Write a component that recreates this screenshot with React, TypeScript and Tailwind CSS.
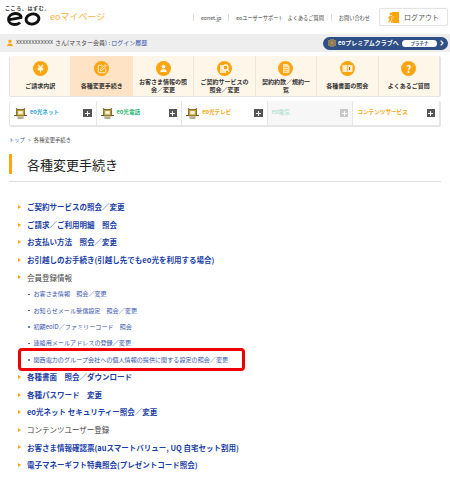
import { ChevronRight, JapaneseYen, Plus, SquarePen, User } from "lucide-react";
import type { ReactNode } from "react";

const jp = "[font-family:'Noto_Sans_CJK_JP','Noto_Sans',sans-serif]";

function EoLogo() {
  return (
    <svg width="34" height="14" viewBox="0 0 34 14" className="mt-[1px] ml-[2px]">
      <path
        d="M2.8 7.6 14 5.6C14.5 2.8 11 1.4 8 1.5 4 1.8 1.5 4.5 1.5 7.5c0 3.3 3 5 6 5 2.5 0 4.500-.7 5.500-2"
        fill="none"
        stroke="#111"
        strokeWidth="2.8"
      />
      <ellipse cx="25.500" cy="7" rx="6.500" ry="5" transform="rotate(-12 25.500 7)" fill="none" stroke="#111" strokeWidth="2.9" />
    </svg>
  );
}

function MenuTile({ icon, label, active }: { icon: ReactNode; label: string; active?: boolean }) {
  return (
    <div
      className={`flex h-[40px] flex-1 flex-col items-center border-r border-[#f0e6d8] last:border-r-0 ${
        active ? "bg-[#ffe3c4]" : "bg-[#fff6ea]"
      }`}
    >
      <div className="mt-[5px] flex h-[15px] w-[15px] shrink-0 items-center justify-center rounded-full bg-[#fda50f] text-white">
        {icon}
      </div>
      <div className="mt-[1px] flex h-[18px] items-center px-[5px] text-center text-[6px] leading-[8px] font-bold text-[#333]">
        {label}
      </div>
    </div>
  );
}

function SearchDocIcon() {
  return (
    <svg width="11" height="11" viewBox="0 0 11 11">
      <rect x="1" y="2" width="6" height="8" fill="#ffe3b8" />
      <circle cx="6.5" cy="4.5" r="2.6" fill="#fda50f" stroke="#fff" strokeWidth="1.2" />
      <path d="M8.3 6.4 10.2 8.6" stroke="#fff" strokeWidth="1.3" />
    </svg>
  );
}

function DocIcon() {
  return (
    <svg width="10" height="11" viewBox="0 0 10 11">
      <path d="M2 1h4.5L8.500 3v7H2z" fill="#ffe3b8" />
      <path d="M3.5 4.5h3.500M3.5 6.5h3.500M3.5 8.5h2.500" stroke="#fda50f" strokeWidth=".7" />
    </svg>
  );
}

function BookIcon() {
  return (
    <svg width="11" height="9" viewBox="0 0 11 9">
      <rect x=".5" y="1" width="10" height="7" fill="#ffe9c8" />
      <path d="M5.500 1v7" stroke="#fda50f" strokeWidth=".6" />
      <path d="M7.500 3v3" stroke="#b06a00" strokeWidth="1" />
    </svg>
  );
}

function Mascot({ body, line }: { body: string; line: string }) {
  return (
    <svg width="13" height="12" viewBox="0 0 13 12" className="shrink-0">
      <path d="M2 1.500 4 3M11 1.500 9 3" stroke={line} strokeWidth="1.1" />
      <rect x="2.5" y="2.5" width="8" height="6.5" rx=".8" fill={body} stroke={line} strokeWidth=".8" />
      <rect x="4.2" y="4" width="4.6" height="3.4" fill="#f4f1de" />
      <path d="M0 8.500h3M10 8.500h3M3.500 11h6" stroke={line} strokeWidth="1.2" />
    </svg>
  );
}

function ServiceTab({
  label,
  color,
  width,
  mascot,
  disabled,
}: {
  label: string;
  color: string;
  width: string;
  mascot?: ReactNode;
  disabled?: boolean;
}) {
  return (
    <div
      className={`flex h-full items-center border-r border-[#e6e6e6] pr-[4px] pl-[4px] last:border-r-0 ${width} ${
        disabled ? "bg-[#f7f7f7]" : ""
      }`}
    >
      {mascot}
      <span className={`flex-1 text-[5.6px] leading-none font-bold whitespace-nowrap ${mascot ? "ml-[3px]" : ""} ${color}`}>{label}</span>
      <span className={`flex h-[8.5px] w-[8.5px] items-center justify-center text-white ${disabled ? "bg-[#c8c8c8]" : "bg-[#555]"}`}>
        <Plus className="h-[7px] w-[7px]" strokeWidth={3.5} />
      </span>
    </div>
  );
}

function MainRow({ label, plain }: { label: string; plain?: boolean }) {
  return (
    <li className="flex h-[17.6px] items-center">
      <span className="mr-[6px] h-0 w-0 border-y-[2.5px] border-l-[3px] border-y-transparent border-l-[#fda50f]" />
      <span className={`text-[7.5px] leading-none whitespace-nowrap ${plain ? "text-[#444]" : "font-bold text-[#1c3fa8]"}`}>{label}</span>
    </li>
  );
}

function SubRow({ label }: { label: string }) {
  return (
    <li className="flex h-[16.4px] items-center pl-[10px] text-[6.1px] leading-none whitespace-nowrap text-[#3554ad]">
      <span className="mr-[4px] h-[1.5px] w-[1.5px] rounded-full bg-[#3554ad]" />
      {label}
    </li>
  );
}

export default function App() {
  return (
    <div className={`relative h-[486px] w-[450px] overflow-hidden bg-white ${jp}`}>
      {/* header */}
      <header className="flex h-[34px] items-start">
        <div className="ml-[5px] flex w-[41px] shrink-0 flex-col pt-[5px]">
          <span className="text-[5px] leading-[6px] font-bold tracking-[0.6px] whitespace-nowrap text-[#333]">こころ、はずむ。</span>
          <EoLogo />
        </div>
        <span className="mt-[10px] ml-[4px] text-[9px] leading-[14px] text-[#fdb13f]">eoマイページ</span>
        <nav className="mt-[14px] ml-auto flex items-center text-[5.2px] leading-[7px] text-[#444]">
          <span className="border-l border-[#ddd] pl-[7px]">eonet.jp</span>
          <span className="ml-[7px] border-l border-[#ddd] pl-[7px]">eoユーザーサポート</span>
          <span className="ml-[4px]">よくあるご質問</span>
          <span className="ml-[7px] border-l border-[#ddd] pl-[7px]">お問い合わせ</span>
        </nav>
        <div className="mt-[8px] mr-[2px] ml-[9px] flex h-[18px] w-[69px] items-center justify-center rounded-[2px] border border-[#e4e4e4] text-[7px] text-[#555] shadow-[0_0_1px_#ddd]">
          <svg width="11" height="11" viewBox="0 0 11 11" className="mr-[5px]">
            <rect x="4" y="0" width="7" height="11" fill="#fda50f" />
            <circle cx="3" cy="2" r="1.5" fill="#fda50f" />
            <path d="M0 5 3 3.500 5.500 5v1L3.600 5.500V8l1 3H3L2.300 8.600 1.200 11H0l1-3V6L0 6.500z" fill="#fda50f" stroke="#fff" strokeWidth=".3" />
          </svg>
          ログアウト
        </div>
      </header>

      {/* member bar */}
      <div className="flex h-[18px] items-center bg-[#eeeeee] pl-[6px] text-[6px] leading-none text-[#444]">
        <User className="mr-[2px] h-[8px] w-[8px] fill-[#fda50f] text-[#fda50f]" />
        <span className="mr-[2px] text-[5.4px]">XXXXXXXXXXXX</span>
        さん(マスター会員) : <span className="ml-[1px] text-[#3554ad]">ログイン履歴</span>
        <div className="mr-[2px] ml-auto flex h-[13px] w-[125px] items-center rounded-full bg-[#2f5086] pr-[2px] pl-[5px] text-[6px] font-bold text-white">
          <svg width="8" height="8" viewBox="0 0 8 8" className="mr-[2px]">
            <path d="M1 1v6M3 0v8M5 0v8M7 1v6M3 4h2" stroke="#e0a040" strokeWidth="1.1" />
          </svg>
          eoプレミアムクラブへ
          <span className="ml-auto flex h-[7px] w-[35px] items-center justify-center rounded-full bg-white text-[4.5px] text-[#2f5086]">プラチナ</span>
          <ChevronRight className="ml-[1px] h-[8px] w-[8px]" strokeWidth={3.5} />
        </div>
      </div>

      {/* service menu */}
      <div className="mx-[9px] mt-[4px] flex overflow-hidden rounded-[2px] border-r-2 border-b border-l border-[#e4e4e4]">
        <MenuTile icon={<JapaneseYen className="h-[9px] w-[9px]" strokeWidth={3} />} label="ご請求内訳" />
        <MenuTile active icon={<SquarePen className="h-[10px] w-[10px]" strokeWidth={2} />} label="各種変更手続き" />
        <MenuTile icon={<User className="h-[9px] w-[9px] fill-white" />} label="お客さま情報の照会／変更" />
        <MenuTile icon={<SearchDocIcon />} label="ご契約サービスの照会／変更" />
        <MenuTile icon={<DocIcon />} label="契約約款／規約一覧" />
        <MenuTile icon={<BookIcon />} label="各種書面の照会" />
        <MenuTile icon={<span className="text-[10px] leading-none font-bold">?</span>} label="よくあるご質問" />
      </div>

      <div className="mx-[9px] mt-[4px] flex h-[26px] rounded-[2px] border-r-2 border-b-2 border-l border-[#e6e6e6]">
        <ServiceTab width="w-[87px]" label="eo光ネット" color="text-[#29a6e0]" mascot={<Mascot body="#c49a2a" line="#6b5a20" />} />
        <ServiceTab width="w-[86px]" label="eo光電話" color="text-[#2bb673]" mascot={<Mascot body="#b59a30" line="#6b5a20" />} />
        <ServiceTab width="w-[86px]" label="eo光テレビ" color="text-[#fda50f]" mascot={<Mascot body="#c49a2a" line="#6b5a20" />} />
        <ServiceTab width="w-[86px]" label="eo電気" color="text-[#b5e3d3]" disabled />
        <ServiceTab width="w-[86px]" label="コンテンツサービス" color="text-[#fda50f]" />
      </div>

      {/* breadcrumb + title */}
      <div className="mt-[9.5px] ml-[9px] flex h-[8px] items-center text-[5.3px] leading-none text-[#444]">
        <span className="text-[#3554ad]">トップ</span>
        <span className="mx-[3px] text-[#888]">&gt;</span>
        各種変更手続き
      </div>
      <div className="mx-[9px] mt-[9.5px] border-b border-[#dddddd] pb-[7px]">
        <h1 className="flex h-[20px] items-center border-l-[3px] border-[#fda50f] pl-[15px] text-[13px] leading-none text-[#222]">各種変更手続き</h1>
      </div>

      {/* link list */}
      <ul className="mt-[16.2px] ml-[18px]">
        <MainRow label="ご契約サービスの照会／変更" />
        <MainRow label="ご請求／ご利用明細　照会" />
        <MainRow label="お支払い方法　照会／変更" />
        <MainRow label="お引越しのお手続き(引越し先でもeo光を利用する場合)" />
        <MainRow plain label="会員登録情報" />
        <SubRow label="お客さま情報　照会／変更" />
        <SubRow label="お知らせメール受信設定　照会／変更" />
        <SubRow label="初期eoID／ファミリーコード　照会" />
        <SubRow label="連絡用メールアドレスの登録／変更" />
        <SubRow label="関西電力のグループ会社への個人情報の提供に関する設定の照会／変更" />
        <MainRow label="各種書面　照会／ダウンロード" />
        <MainRow label="各種パスワード　変更" />
        <MainRow label="eo光ネット セキュリティー照会／変更" />
        <MainRow plain label="コンテンツユーザー登録" />
        <MainRow label="お客さま情報確認票(auスマートバリュー, UQ 自宅セット割用)" />
        <MainRow label="電子マネーギフト特典照会(プレゼントコード照会)" />
      </ul>

      {/* callout drawn over the page */}
      <div className="absolute top-[348px] left-[18px] h-[23px] w-[227px] rounded-[4px] border-[3px] border-[#f00000]" />
    </div>
  );
}
